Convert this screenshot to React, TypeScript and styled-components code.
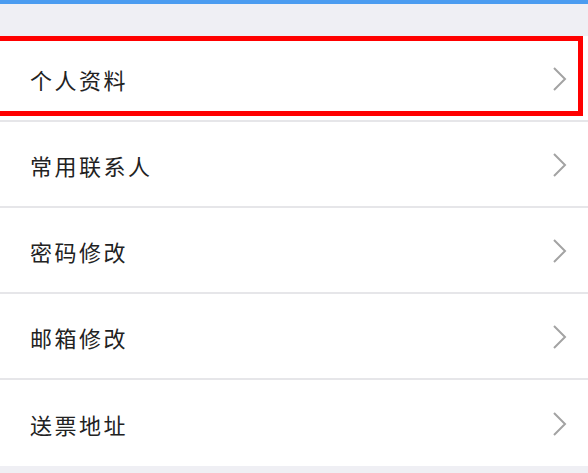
import React from 'react';
import styled, { createGlobalStyle } from 'styled-components';

const GlobalStyle = createGlobalStyle`
  html, body {
    margin: 0;
    padding: 0;
    background: #efeff4;
  }
  body {
    font-family: "Noto Sans CJK SC", "Noto Sans", sans-serif;
  }
`;

const Page = styled.div`
  width: 588px;
  height: 473px;
  background: #efeff4;
  overflow: hidden;
`;

const TopBar = styled.div`
  height: 4px;
  background: #4b9cf0;
`;

const Spacer = styled.div`
  height: 32px;
`;

const List = styled.ul`
  list-style: none;
  margin: 0;
  padding: 0;
  background: #fff;
`;

const Row = styled.li`
  position: relative;
  display: flex;
  align-items: center;
  justify-content: space-between;
  height: 86px;
  padding: 2px 20px 0 30px;
  border-bottom: 2px solid #e6e6e9;
  box-sizing: border-box;

  &:last-child {
    border-bottom: none;
    height: 86px;
  }
`;

const Label = styled.span`
  font-size: 22px;
  letter-spacing: 2.5px;
  color: #222;
`;

// annotation box drawn over the highlighted row
const Highlight = styled.div`
  position: absolute;
  left: -6px;
  top: 0;
  width: 589px;
  height: 80px;
  border: 5px solid #ff0000;
  box-sizing: border-box;
  pointer-events: none;
`;

const Chevron = () => (
  <svg width="16" height="26" viewBox="0 0 16 26">
    <path d="M2 2 L13 13 L2 24" fill="none" stroke="#a3a3a3" strokeWidth="2" />
  </svg>
);

const items = ['个人资料', '常用联系人', '密码修改', '邮箱修改', '送票地址'];

export default function App() {
  return (
    <Page>
      <GlobalStyle />
      <TopBar />
      <Spacer />
      <List>
        {items.map((label, i) => (
          <Row key={label}>
            <Label>{label}</Label>
            <Chevron />
            {i === 0 ? <Highlight /> : null}
          </Row>
        ))}
      </List>
    </Page>
  );
}
